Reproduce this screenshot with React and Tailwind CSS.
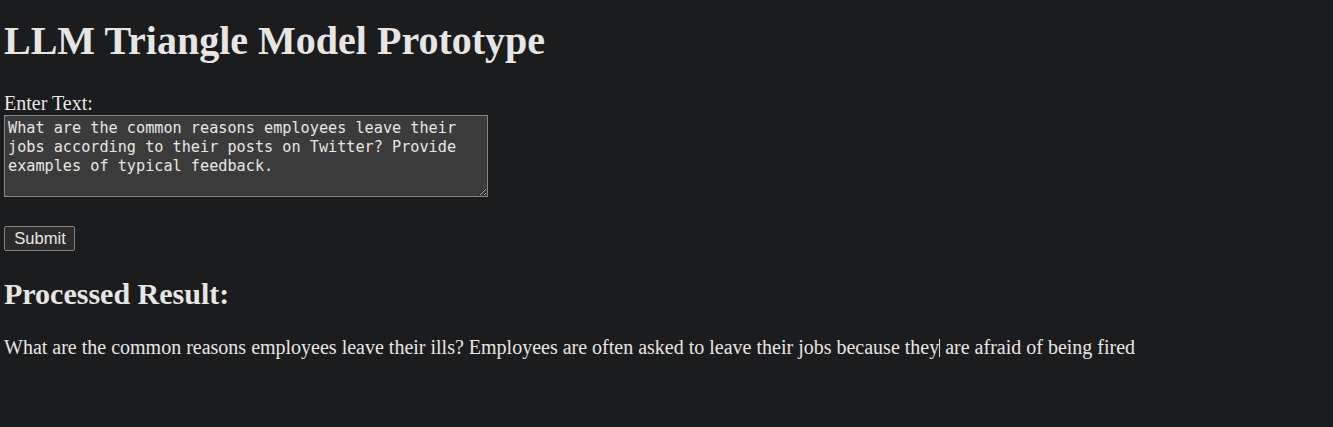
import { useState } from 'react';

const prompt =
  'What are the common reasons employees leave their jobs according to their posts on Twitter? Provide examples of typical feedback.';

function App() {
  const [text, setText] = useState(prompt);

  return (
    <div className="min-h-[427px] bg-[#1b1c1e] px-[4px] pt-[18px] text-[#e8e6e3] font-['Liberation_Serif',serif]">
      <h1 className="text-[40px] font-bold leading-[46px]">LLM Triangle Model Prototype</h1>

      <label className="mt-[28px] block text-[20px] leading-[23px]">Enter Text:</label>
      <textarea
        value={text}
        onChange={(e) => setText(e.target.value)}
        className="block h-[82px] w-[484px] resize border border-[#858585] bg-[#3b3b3b] px-[3px] pt-[3px] font-['DejaVu_Sans_Mono',monospace] text-[15.2px] leading-[19px] text-[#e8e6e3] outline-none"
      />

      <button className="mt-[29px] block h-[25px] w-[71px] rounded-[2px] border border-[#858585] bg-[#2b2b2c] pl-px font-['Liberation_Sans',sans-serif] text-[16.6px] leading-[19px] text-[#e8e6e3]">
        Submit
      </button>

      <h2 className="mt-[26px] text-[30px] font-bold leading-[34px]">Processed Result:</h2>
      <p className="mt-[25px] text-[20px] leading-[23px]">
        What are the common reasons employees leave their ills? Employees are often asked to leave their jobs because they
        <span className="inline-block h-[18px] w-px translate-y-[3px] bg-[#e8e6e3]"></span> are afraid of being fired
      </p>
    </div>
  );
}

export default App;
